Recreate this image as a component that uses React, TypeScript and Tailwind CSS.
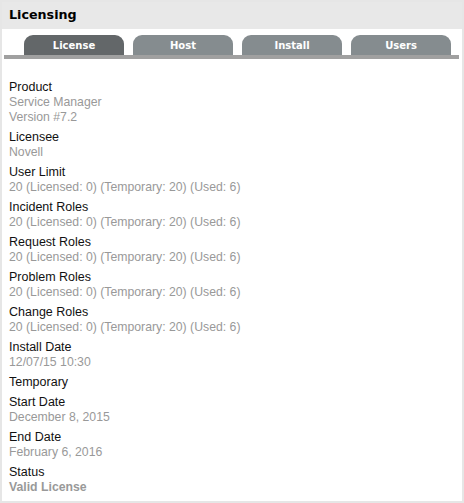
import React from "react";

const rows: { label: string; values: string[]; bold?: boolean }[] = [
  { label: "Product", values: ["Service Manager", "Version #7.2"] },
  { label: "Licensee", values: ["Novell"] },
  { label: "User Limit", values: ["20 (Licensed: 0) (Temporary: 20) (Used: 6)"] },
  { label: "Incident Roles", values: ["20 (Licensed: 0) (Temporary: 20) (Used: 6)"] },
  { label: "Request Roles", values: ["20 (Licensed: 0) (Temporary: 20) (Used: 6)"] },
  { label: "Problem Roles", values: ["20 (Licensed: 0) (Temporary: 20) (Used: 6)"] },
  { label: "Change Roles", values: ["20 (Licensed: 0) (Temporary: 20) (Used: 6)"] },
  { label: "Install Date", values: ["12/07/15 10:30"] },
  { label: "Temporary", values: [] },
  { label: "Start Date", values: ["December 8, 2015"] },
  { label: "End Date", values: ["February 6, 2016"] },
  { label: "Status", values: ["Valid License"], bold: true },
];

const tabs = ["License", "Host", "Install", "Users"];

export default function App() {
  return (
    <div className="w-[464px] h-[503px] bg-white">
      <div className="w-full h-full border-2 border-[#e6e6e6] flex flex-col">
        <div className="h-[27px] bg-[#e8e8e8] flex items-center pl-[7px] pb-[1px]">
          <span
            className="text-[12.7px] font-bold text-black"
            style={{ fontFamily: '"DejaVu Sans", Verdana, sans-serif' }}
          >
            Licensing
          </span>
        </div>
        <div className="pt-[6px] px-[2px]">
          <div className="flex gap-[9px] pl-[20px] h-[20px]">
            {tabs.map((t, i) => (
              <div
                key={t}
                className={`w-[100px] h-[20px] rounded-t-[9px] flex items-center justify-center text-white text-[10px] font-bold ${
                  i === 0 ? "bg-[#636769]" : "bg-[#858c8f]"
                }`}
                style={{ fontFamily: '"DejaVu Sans", Verdana, sans-serif' }}
              >
                {t}
              </div>
            ))}
          </div>
          <div className="h-[4px] bg-[#a0a0a0] w-[455px]" />
        </div>
        <div
          className="pl-[7px] pt-[21px] flex flex-col gap-[5px]"
          style={{ fontFamily: '"Liberation Sans", Arial, sans-serif' }}
        >
          {rows.map((r) => (
            <div key={r.label} className="flex flex-col">
              <div className="text-[12.5px] leading-[15px] text-[#111]">{r.label}</div>
              {r.values.map((v) => (
                <div
                  key={v}
                  className={`text-[12.25px] leading-[15px] text-[#999] ${r.bold ? "font-bold" : ""}`}
                >
                  {v}
                </div>
              ))}
            </div>
          ))}
        </div>
      </div>
    </div>
  );
}
